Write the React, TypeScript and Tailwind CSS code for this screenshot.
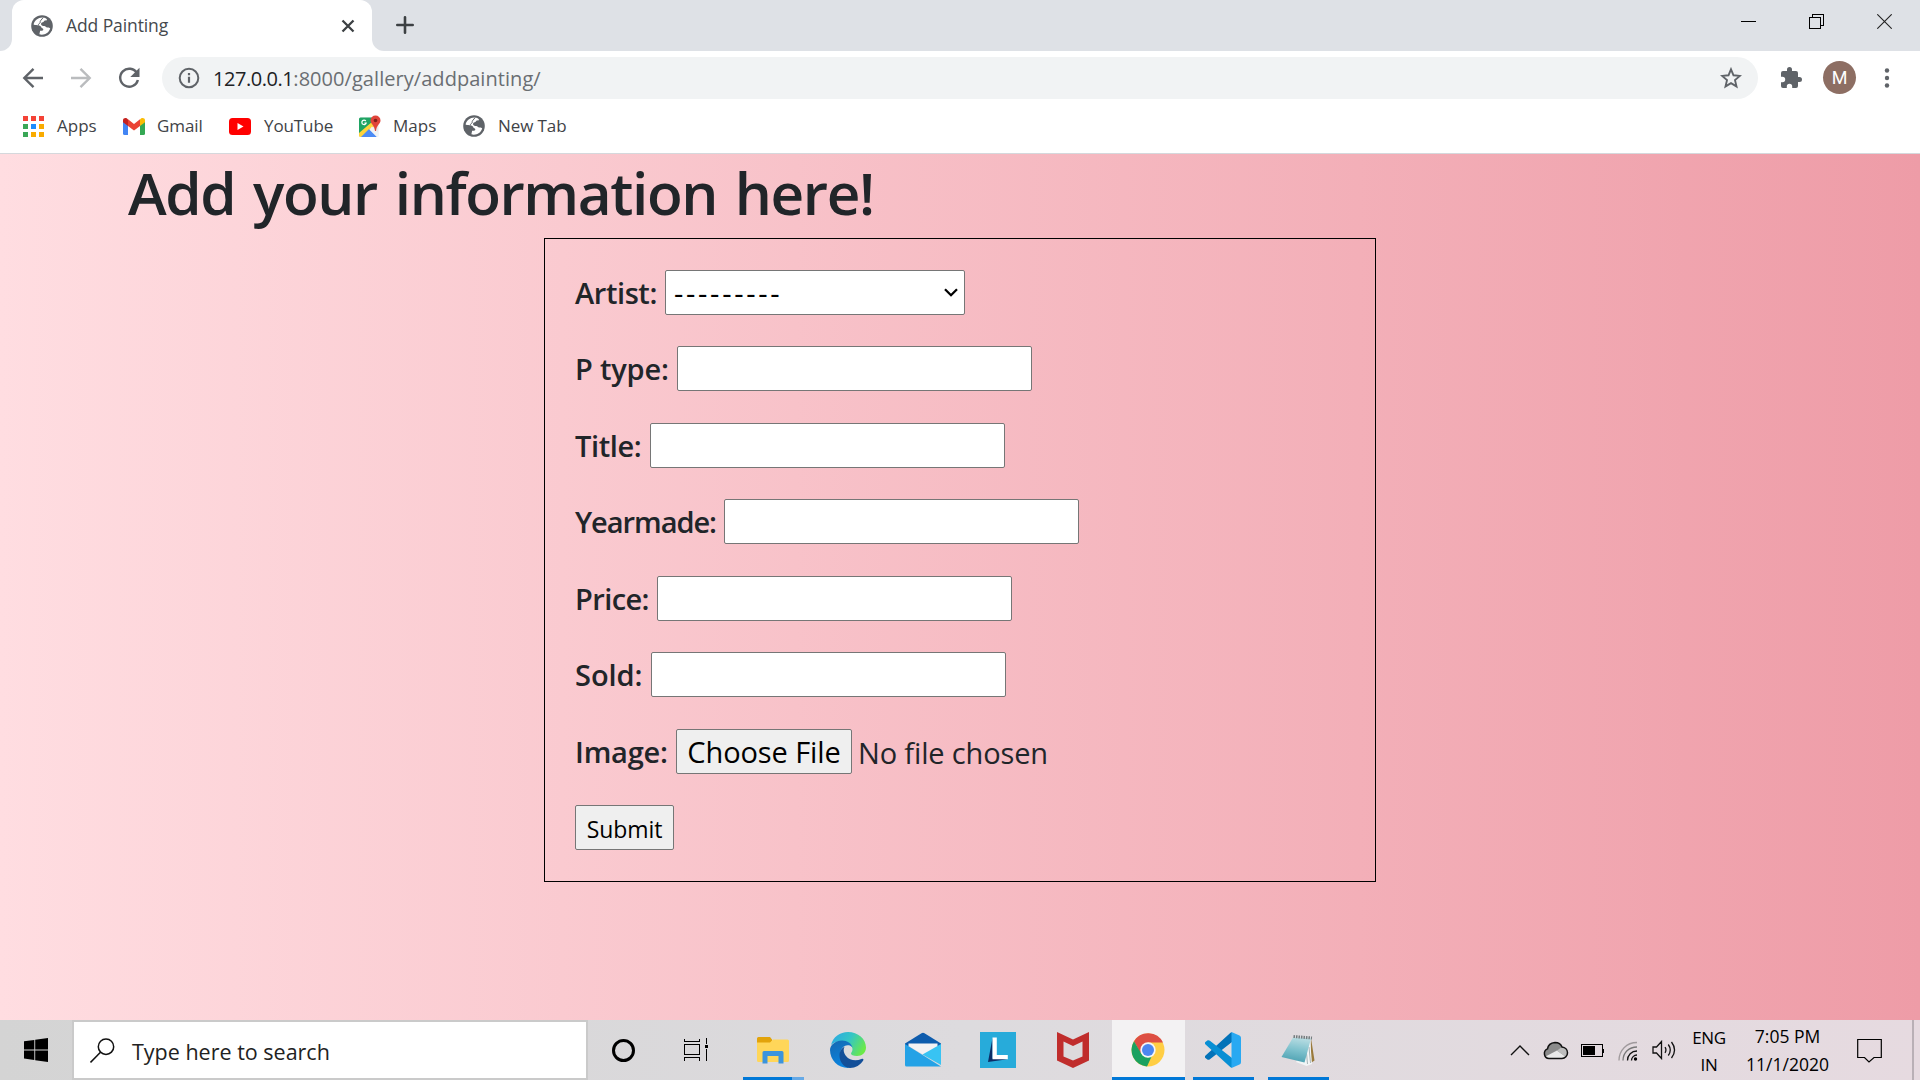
import type { ReactNode } from "react";

function Globe() {
  return (
    <svg width="22" height="22" viewBox="0 0 22 22" className="shrink-0">
      <circle cx="11" cy="11" r="10.8" fill="#5f6368" />
      <path
        d="M12.500 2.600C8 2 3.400 5 2.600 9.600c1.500.9 3.600.6 5.300.8 1.400.2 2.200 1 2.500 2 .3.9 1.500.7 1.800 1.500.3.9-.3 1.700-1.200 1.800l-1.900.1-.7 3.500c4.600 1.300 9.400-1.300 10.800-5.900-.7-.9-1.700-1.100-2.900-1-1.400.1-1.700-1.400-3-1.500-1.400-.1-2.700-.3-3.200-1.500-.3-1.200.5-2 1.700-2.200 1-.2 1-1.500 2-1.800l2.200-.2c.3-.9-.9-1.900-3.500-2.600z"
        fill="#fff"
      />
      <path d="M12.300 2.400 9.500 5.800c-.7 1 .2 1.600-.7 2.300-1 .6-1.700 1.400-1.200 2.400" fill="none" stroke="#5f6368" strokeWidth="1" />
    </svg>
  );
}

function TabStrip() {
  return (
    <div className="flex h-[51px] bg-[#dee1e6]">
      <div className="h-full w-3 bg-white">
        <div className="h-full w-full rounded-br-[12px] bg-[#dee1e6]" />
      </div>
      <div className="flex h-full w-[360px] items-center rounded-t-[12px] bg-white pr-[17px] pl-[19px]">
        <Globe />
        <span className="ml-[13px] flex-1 pb-[2px] text-[17.5px] leading-[48px] tracking-[-0.1px] text-[#45494d]">Add Painting</span>
        <svg width="14" height="14" viewBox="0 0 14 14" fill="none" stroke="#3c4043" strokeWidth="2.300">
          <path d="M1.500 1.500 12.500 12.500M12.500 1.500 1.500 12.500" />
        </svg>
      </div>
      <div className="h-full w-3 bg-white">
        <div className="h-full w-full rounded-bl-[12px] bg-[#dee1e6]" />
      </div>
      <svg className="mt-4 ml-3" width="18" height="18" viewBox="0 0 18 18" stroke="#3c4043" strokeWidth="2.600" strokeLinecap="round">
        <path d="M9 1.300v15.400M1.300 9h15.400" />
      </svg>
      <div className="mr-px ml-auto flex h-[42px] items-center">
        <div className="flex w-[69px] justify-center">
          <div className="h-px w-[15px] bg-black" />
        </div>
        <div className="flex w-[67px] justify-center">
          <svg width="15" height="15" viewBox="0 0 15 15" fill="none" stroke="#000" shapeRendering="crispEdges">
            <path d="M.5 3.500h11v11H.5zM3.500 3.500v-3h11v11h-3" />
          </svg>
        </div>
        <div className="flex w-[69px] justify-center">
          <svg width="15" height="15" viewBox="0 0 15 15" stroke="#222" strokeWidth="1.100">
            <path d="M.3.3 14.700 14.700M14.700.3.3 14.700" />
          </svg>
        </div>
      </div>
    </div>
  );
}

function Toolbar() {
  return (
    <div className="flex h-[54px] items-center pl-[22px]">
      <svg width="22" height="22" viewBox="0 0 22 22" fill="none" stroke="#5f6368" strokeWidth="2.400">
        <path d="M21 11H3M11.500 1.800 2.300 11l9.200 9.200" />
      </svg>
      <svg className="ml-[26px]" width="22" height="22" viewBox="0 0 22 22" fill="none" stroke="#babcbe" strokeWidth="2.400">
        <path d="M1 11h18M10.500 1.800 19.700 11l-9.200 9.200" />
      </svg>
      <svg className="ml-[25px]" width="24" height="24" viewBox="0 0 24 24" fill="none">
        <path d="M20 7.200A9 9 0 1 0 20.900 14" stroke="#5f6368" strokeWidth="2.400" />
        <path d="M22.500 1.800v9.200h-9.200z" fill="#5f6368" />
      </svg>
      <div className="ml-[21px] flex h-[42px] w-[1596px] items-center rounded-full bg-[#f1f3f4] pr-4 pl-4">
        <svg width="22" height="22" viewBox="0 0 22 22" fill="none" stroke="#5f6368" strokeWidth="2">
          <circle cx="11" cy="11" r="9.300" />
          <path d="M11 9.800v6M11 6v2.200" strokeWidth="2.200" />
        </svg>
        <span className="ml-[13px] flex-1 pt-[2px] text-[20px] leading-[40px] text-[#6a6e72]">
          <span className="tracking-[-0.45px] text-[#202124]">127.0.0.1</span>
          <span className="tracking-[0.05px]">:8000/gallery/addpainting/</span>
        </span>
        <svg width="22" height="22" viewBox="0 0 22 22" fill="none" stroke="#5f6368" strokeWidth="1.900">
          <path d="m11 2.300 2.500 6 6.400.6-4.900 4.200 1.500 6.300L11 16.100l-5.500 3.300L7 13.100 2.100 8.900l6.400-.6z" />
        </svg>
      </div>
      <svg className="ml-[21px]" width="24" height="24" viewBox="0 0 24 24" fill="#5f6368">
        <path d="M20.500 11H19V7a2 2 0 0 0-2-2h-4V3.500a2.500 2.500 0 0 0-5 0V5H4a2 2 0 0 0-2 2v3.800h1.500a2.700 2.700 0 0 1 0 5.400H2V20a2 2 0 0 0 2 2h3.800v-1.500a2.700 2.700 0 0 1 5.400 0V22H17a2 2 0 0 0 2-2v-4h1.500a2.500 2.500 0 0 0 0-5z" />
      </svg>
      <div className="mb-px ml-5 flex size-[33px] items-center justify-center rounded-full bg-[#8d6e63] font-[Roboto] text-[18px] text-white">M</div>
      <svg className="ml-7" width="6" height="20" viewBox="0 0 6 20" fill="#5f6368">
        <circle cx="3" cy="2.500" r="2.200" />
        <circle cx="3" cy="10" r="2.200" />
        <circle cx="3" cy="17.500" r="2.200" />
      </svg>
    </div>
  );
}

function AppsIcon() {
  return (
    <div className="grid grid-cols-3 gap-[3px]">
      <i className="size-[5px] bg-[#f44336]" />
      <i className="size-[5px] bg-[#f44336]" />
      <i className="size-[5px] bg-[#f44336]" />
      <i className="size-[5px] bg-[#3aa757]" />
      <i className="size-[5px] bg-[#1a8cff]" />
      <i className="size-[5px] bg-[#f9ab00]" />
      <i className="size-[5px] bg-[#3aa757]" />
      <i className="size-[5px] bg-[#f9ab00]" />
      <i className="size-[5px] bg-[#f9ab00]" />
    </div>
  );
}

function GmailIcon() {
  return (
    <svg width="22" height="17" viewBox="0 0 22 17">
      <path d="M0 3v12.500A1.500 1.500 0 0 0 1.500 17H5V7z" fill="#4285f4" />
      <path d="M22 3v12.500a1.500 1.500 0 0 1-1.500 1.500H17V7z" fill="#34a853" />
      <path d="M17 1.300 11 6 5 1.300V8l6 4.600L17 8z" fill="#ea4335" />
      <path d="M0 3.300V2.500C0 .3 2.300-.5 4 .6l1 .8V8L0 4.200z" fill="#c5221f" />
      <path d="M22 3.300V2.500C22 .3 19.700-.5 18 .6l-1 .8V8l5-3.800z" fill="#fbbc04" />
    </svg>
  );
}

function YouTubeIcon() {
  return (
    <svg width="22" height="17" viewBox="0 0 22 17">
      <rect width="22" height="17" rx="3.500" fill="#f00" />
      <path d="m8.500 5 6 3.500-6 3.500z" fill="#fff" />
    </svg>
  );
}

function MapsIcon() {
  return (
    <svg width="23" height="23" viewBox="0 0 23 23" className="shrink-0">
      <rect x="1" y="2.500" width="19.500" height="19.500" rx="1.500" fill="#e8eaed" />
      <path d="M1 20V4a1.500 1.500 0 0 1 1.500-1.500H16L15 8 1 20z" fill="#1fa463" />
      <path d="M1 18 14.500 6.500 16 11.500 4 22H2.500A1.500 1.500 0 0 1 1 20.500z" fill="#ffd43b" />
      <path d="m11 14 8 8h-16z" fill="#4c8bf5" />
      <path d="m14 11.500 6.500 6.500v2.500A1.500 1.500 0 0 1 19 22l-7.500-7.500z" fill="#f1f3f4" />
      <path d="M7.800 6A2.200 2.200 0 1 0 8.200 8H6.400" fill="none" stroke="#fff" strokeWidth="1.200" />
      <path d="M17.500.5a5 5 0 0 1 5 5c0 3.500-4 4.500-4.500 10.500h-1c-.5-6-4.500-7-4.500-10.500a5 5 0 0 1 5-5z" fill="#e0443a" />
      <circle cx="17.500" cy="5.500" r="1.800" fill="#7e1f1a" />
    </svg>
  );
}

function Bookmark({ icon, label, gap }: { icon: ReactNode; label: string; gap: string }) {
  return (
    <div className={"flex h-full items-center " + gap}>
      <div className="flex w-[22px] justify-center">{icon}</div>
      <span className="text-[17px] leading-[42px] whitespace-nowrap text-[#3f4347]">{label}</span>
    </div>
  );
}

function BookmarksBar() {
  return (
    <div className="h-[49px] border-b border-[#d5d8dc] pl-[22px]">
      <div className="flex h-[42px]">
        <div className="w-[101px]"><Bookmark icon={<AppsIcon />} label="Apps" gap="gap-[13px]" /></div>
        <div className="w-[106px]"><Bookmark icon={<GmailIcon />} label="Gmail" gap="gap-[12px] tracking-[-0.1px]" /></div>
        <div className="w-[129px]"><Bookmark icon={<YouTubeIcon />} label="YouTube" gap="gap-[13px] tracking-[-0.1px]" /></div>
        <div className="w-[105px]"><Bookmark icon={<MapsIcon />} label="Maps" gap="gap-[13px]" /></div>
        <Bookmark icon={<Globe />} label="New Tab" gap="gap-[13px] tracking-[-0.1px]" />
      </div>
    </div>
  );
}

function Field({ label, spacing, children }: { label: string; spacing: string; children: ReactNode }) {
  return (
    <div className="flex h-[76.5px]">
      <label className={"text-[29px] leading-[46px] font-semibold whitespace-nowrap text-[#212529] " + spacing}>{label}</label>
      {children}
    </div>
  );
}

function TextInput() {
  return <input className="h-[45px] w-[355px] rounded-[2px] border border-[#767676] bg-white px-2 text-[29px]" />;
}

function PaintingForm() {
  return (
    <form className="ml-[544px] h-[644px] w-[832px] border border-black pt-[30.900px] pl-[30px]">
      <Field label="Artist:" spacing="w-[90px] tracking-[-0.4px]">
        <div className="flex h-[45px] w-[300px] items-center justify-between rounded-[2px] border border-[#767676] bg-white pr-[6px] pl-[8px]">
          <span className="text-[29px] leading-[43px] tracking-[2.700px] text-black">---------</span>
          <svg width="14" height="9" viewBox="0 0 14 9" fill="none" stroke="#000" strokeWidth="2.300">
            <path d="m1 1.200 6 6 6-6" />
          </svg>
        </div>
      </Field>
      <Field label="P type:" spacing="w-[102px] tracking-[-0.2px]"><TextInput /></Field>
      <Field label="Title:" spacing="w-[75px] tracking-[-0.4px]"><TextInput /></Field>
      <Field label="Yearmade:" spacing="w-[149px] tracking-[-1.050px]"><TextInput /></Field>
      <Field label="Price:" spacing="w-[82px] tracking-[-0.6px]"><TextInput /></Field>
      <Field label="Sold:" spacing="w-[76px] tracking-[-0.050px]"><TextInput /></Field>
      <Field label="Image:" spacing="w-[101px] tracking-[-0.2px]">
        <button type="button" className="h-[45px] w-[176px] rounded-[2px] border border-[#767676] bg-[#efefef] text-[29px] leading-[43px] tracking-[-0.1px] whitespace-nowrap text-black">
          Choose File
        </button>
        <span className="ml-[6px] text-[29px] leading-[47px] tracking-[-0.150px] text-[#212529]">No file chosen</span>
      </Field>
      <button type="button" className="h-[45px] w-[99px] rounded-[2px] border border-[#767676] bg-[#efefef] pt-[3px] text-[23px] leading-[40px] tracking-[-0.1px] text-black">
        Submit
      </button>
    </form>
  );
}

function ExplorerIcon() {
  return (
    <svg width="32" height="28" viewBox="0 0 32 28">
      <path d="M0 2.500A1.500 1.500 0 0 1 1.500 1H13l2 2.500V8H0z" fill="#e2a30b" />
      <path d="M0 6.500h13l3-3h14.500A1.500 1.500 0 0 1 32 5v19.500a1.500 1.500 0 0 1-1.500 1.500h-29A1.500 1.500 0 0 1 0 24.500z" fill="#ffd659" />
      <path d="M5.500 27.500V16.500A1.500 1.500 0 0 1 7 15h18a1.500 1.500 0 0 1 1.500 1.500v11h-5V20H10.500v7.500z" fill="#3c94dc" />
    </svg>
  );
}

function EdgeIcon() {
  return (
    <svg width="36" height="36" viewBox="0 0 36 36">
      <defs>
        <linearGradient id="edgeTop" x1="0" y1="0.200" x2="1" y2="0.600">
          <stop offset="0" stopColor="#2ba9e4" />
          <stop offset="0.500" stopColor="#35c6c4" />
          <stop offset="1" stopColor="#6bea46" />
        </linearGradient>
        <linearGradient id="edgeLeft" x1="0" y1="0" x2="0.400" y2="1">
          <stop offset="0" stopColor="#1668b0" />
          <stop offset="1" stopColor="#0a84e0" />
        </linearGradient>
      </defs>
      <path d="M1 13C3 5 10 0 18 0c10 0 18 7 18 15.500 0 5-4 8.500-9 8.500-4 0-6-1.200-6-2.500 0-1 1.500-1.700 1.500-4.500C22 12 17 9 12 9 7 9 3 11 1 13z" fill="url(#edgeTop)" />
      <path d="M0 18c0-5 5.500-9.500 12-9.500 5.500 0 9.500 3 10.500 7-1.300-1.600-3-2.200-4.700-2.200C13 13.300 10 18 10 23c0 6 4 11 10 12.900C9 37 0 28.500 0 18z" fill="url(#edgeLeft)" />
      <path d="M14.800 14.500C13 17 13.500 21 16 24c3.500 4.500 10 5.500 15.500 3 1.500-.6 2.500.2 1.700 1.500C30.500 33 25.500 36 20 36 13.500 35.500 9.500 29.500 9.500 23.500c0-4 2-7.500 5.300-9z" fill="#134f99" />
    </svg>
  );
}

function MailIcon() {
  return (
    <svg width="36" height="36" viewBox="0 0 36 36">
      <path d="M0 11.500 16.500 1.200a3 3 0 0 1 3 0L36 11.500V14H0z" fill="#0e5cad" />
      <path d="M3.500 11.500h29V16L19 23 3.500 14z" fill="#f3f2f4" />
      <path d="M36 12v21L17.500 22.500z" fill="#38c3f3" />
      <path d="M0 12l36 22.500H1.500A1.500 1.500 0 0 1 0 33z" fill="#24a2e6" />
    </svg>
  );
}

function LenovoIcon() {
  return (
    <svg width="36" height="36" viewBox="0 0 36 36">
      <path d="M0 0h36v36H0z" fill="#27abda" />
      <path d="M12.500 6 8 30l19.500-2.800-15-1z" fill="#0b2d66" />
      <path d="M12.500 5.500h4.300V23h11v4.200H12.500z" fill="#fff" />
    </svg>
  );
}

function McAfeeIcon() {
  return (
    <svg width="32" height="36" viewBox="0 0 32 36">
      <path d="M0 0l16 7.500L32 0v28.500L16 36 0 28.500z" fill="#c02d2c" />
      <path d="M6.500 9.500 16 14l9.500-4.500v15L16 28.500l-9.500-4z" fill="#dddadc" />
    </svg>
  );
}

function ChromeIcon() {
  return (
    <svg width="34" height="34" viewBox="0 0 34 34">
      <circle cx="17" cy="17" r="16.500" fill="#ffce44" />
      <path d="M3 8.300A16.500 16.500 0 0 1 32 9.500H17L10 21z" fill="#dd4f43" />
      <path d="M3 8.300 10.500 21l6.500 3.500 4.500-3L16 33.500A16.500 16.500 0 0 1 3 8.300z" fill="#1aa15f" />
      <circle cx="17" cy="17" r="7.700" fill="#f5f5f6" />
      <circle cx="17" cy="17" r="6" fill="#4b86f0" />
    </svg>
  );
}

function CodeIcon() {
  return (
    <svg width="36" height="36" viewBox="0 0 36 36">
      <path d="M.3 23.800c-.6.800-.5 1.700.1 2.300L2.700 27.700c.7.300 1.500.2 2.200-.4L27 10V.2L25.500.8z" fill="#0272b8" />
      <path d="M.3 12.200c-.6-.8-.5-1.700.1-2.300L2.700 8.300c.7-.3 1.500-.2 2.200.4L27 26v9.800l-1.500-.6z" fill="#078fd4" />
      <path d="m26.500 0 8 3.400A2.500 2.500 0 0 1 36 5.700v24.600a2.500 2.500 0 0 1-1.500 2.300l-8 3.400z" fill="#29a9f2" />
    </svg>
  );
}

function NotepadIcon() {
  return (
    <svg width="36" height="34" viewBox="0 0 36 34">
      <defs>
        <linearGradient id="notepadCover" x1="0.500" y1="0" x2="0.300" y2="1">
          <stop offset="0" stopColor="#b7dce2" />
          <stop offset="0.500" stopColor="#7cc0cc" />
          <stop offset="1" stopColor="#4a9fb0" />
        </linearGradient>
      </defs>
      <path d="m31 5 3.500 22.500-4.500 3z" fill="#9a7a3c" />
      <path d="M30 5l2 26-5.500 2L16 29z" fill="#f2f5f6" />
      <path d="m29 14 1.500 16M26.500 20l1 11" stroke="#a9b5b8" strokeWidth="1" />
      <path d="M13 4.500 31 5.500 24.500 29.500 1.500 24z" fill="url(#notepadCover)" />
      <path d="M13.500 3.500 32 5" stroke="#737c7e" strokeWidth="3" strokeDasharray="1.500 1" />
    </svg>
  );
}

function AppButton({ icon, bar }: { icon: ReactNode; bar?: ReactNode }) {
  return (
    <div className="flex h-full w-[75px] flex-col items-center">
      <div className="flex h-[57px] items-center pt-[3px] pr-[2px]">{icon}</div>
      {bar}
    </div>
  );
}

function SystemTray() {
  return (
    <div className="ml-auto flex h-full items-center text-black">
      <div className="flex w-9 justify-center">
        <svg width="20" height="11" viewBox="0 0 20 11" fill="none" stroke="#111" strokeWidth="1.400">
          <path d="m1 10 9-9 9 9" />
        </svg>
      </div>
      <div className="flex w-9 justify-center">
        <svg width="26" height="19" viewBox="0 0 26 19">
          <path d="M6 17.500a5 5 0 0 1-1.500-9.600C5 4.500 8 1.800 12 1.500c3.500 0 6 1.800 7 4.500 3 .3 5.500 2.600 5.500 5.700 0 3.300-2.500 5.800-5.500 5.800z" fill="#8b8b8b" />
          <path d="M2.500 15.500 14 9.500l9 6.500-4 1.500H6z" fill="#e9e9e9" />
          <path d="M14 9.500 19 6c3 .3 5.500 2.600 5.500 5.700L23 16z" fill="#bdbdbd" />
          <path d="M6 17.500a5 5 0 0 1-1.500-9.600C5 4.500 8 1.800 12 1.500c3.500 0 6 1.800 7 4.500 3 .3 5.500 2.600 5.500 5.700 0 3.300-2.500 5.800-5.500 5.800z" fill="none" stroke="#111" strokeWidth="1.500" />
        </svg>
      </div>
      <div className="flex w-9 justify-center pl-px">
        <svg width="24" height="13" viewBox="0 0 24 13" shapeRendering="crispEdges">
          <path d="M.5.500h21v12H.500zM22.500 4.500v4" fill="none" stroke="#000" />
          <path d="M2 2h12v9H2z" />
        </svg>
      </div>
      <div className="flex w-9 justify-center pt-[2px]">
        <svg width="20" height="20" viewBox="0 0 20 20" fill="none" strokeWidth="1.300">
          <path d="M1 19.500C1 9.500 8.500 1.500 19 1.500" stroke="#a09a9d" />
          <path d="M5 19.500C5 11.500 11 6 19 6" stroke="#777" />
          <path d="M9.500 19.500c0-5.500 4-9.500 9.500-9.500M13.500 19.500c0-3 2.500-5.500 5.500-5.500" stroke="#111" />
          <circle cx="17.500" cy="18" r="1.700" fill="#000" />
        </svg>
      </div>
      <div className="flex w-9 justify-center">
        <svg width="24" height="20" viewBox="0 0 24 20" fill="none" stroke="#111" strokeWidth="1.300">
          <path d="M1 7h3.500L9.500 1.500v17L4.500 13H1zM13 7.200c1.200 1.800 1.200 3.800 0 5.600M16.300 4.500c2.500 3.500 2.500 7.500 0 11M19.500 2c3.800 5 3.800 11 0 16" />
        </svg>
      </div>
      <div className="w-[54px] pt-px text-center text-[17px] leading-[27px] tracking-[-0.3px]">
        <div>ENG</div>
        <div>IN</div>
      </div>
      <div className="w-[103px] text-center text-[17.500px] leading-[28px]">
        <div>7:05 PM</div>
        <div>11/1/2020</div>
      </div>
      <div className="flex w-[60px] justify-center">
        <svg width="25" height="25" viewBox="0 0 25 25" fill="none" stroke="#000" strokeWidth="1.200">
          <path d="M.7 1.500h23.600v18H17L12 24l-4.500-4.500H.700z" />
        </svg>
      </div>
      <div className="ml-[13px] h-full w-2 border-l-2 border-[#b9b0b6]" />
    </div>
  );
}

function Taskbar() {
  return (
    <div className="flex h-[60px] bg-linear-to-r from-[#d4d4d4] via-[#dddbde] to-[#e6dae0]">
      <div className="flex w-[72px] items-center justify-center">
        <svg width="24" height="24" viewBox="0 0 24 24">
          <path d="M0 3.300 10.300 2v9.500H0zM11.200 1.800 24 0v11.500H11.200zM0 12.500h10.300V22L0 20.600zM11.200 12.500H24V24l-12.800-1.800z" />
        </svg>
      </div>
      <div className="flex w-[516px] items-center border-2 border-[#cacaca] bg-white pl-4">
        <svg width="25" height="25" viewBox="0 0 25 25" fill="none" stroke="#111" strokeWidth="1.500">
          <circle cx="16" cy="8.700" r="7.700" />
          <path d="M10.500 14.200.5 24.400" />
        </svg>
        <span className="ml-[17px] pt-[4px] text-[21.500px] leading-[52px] text-[#222]">Type here to search</span>
      </div>
      <div className="flex w-[72px] items-center justify-center">
        <div className="mr-px size-[23px] rounded-full border-[3px] border-black" />
      </div>
      <div className="flex w-[72px] items-center justify-center">
        <svg width="24" height="24" viewBox="0 0 24 24" fill="none" stroke="#000" shapeRendering="crispEdges">
          <path d="M.5.500v3h15v-3M.5 6.500h15v10H.500zM.5 23v-3.500h15V23M22.500 0v6M22.500 11v12" />
          <path d="M21 7h3v3h-3z" fill="#000" stroke="none" />
        </svg>
      </div>
      <div className="ml-1 flex">
        <AppButton
          icon={<ExplorerIcon />}
          bar={
            <div className="flex h-[3px] w-[61px]">
              <div className="w-[49px] bg-[#0078d7]" />
              <div className="flex-1 bg-[#66a9e6]" />
            </div>
          }
        />
        <AppButton icon={<EdgeIcon />} />
        <AppButton icon={<MailIcon />} />
        <AppButton icon={<LenovoIcon />} />
        <AppButton icon={<McAfeeIcon />} />
        <div className="flex w-[75px] justify-center">
          <div className="w-[73px] bg-[#f3f2f3]">
            <div className="flex h-[57px] items-center justify-center pt-[3px] pr-[2px]"><ChromeIcon /></div>
            <div className="h-[3px] bg-[#0078d7]" />
          </div>
        </div>
        <AppButton icon={<CodeIcon />} bar={<div className="h-[3px] w-[61px] bg-[#0078d7]" />} />
        <AppButton icon={<NotepadIcon />} bar={<div className="h-[3px] w-[61px] bg-[#0078d7]" />} />
      </div>
      <SystemTray />
    </div>
  );
}

export default function App() {
  return (
    <div className="flex h-[1080px] w-[1920px] flex-col overflow-hidden bg-white font-['Open_Sans',sans-serif]">
      <TabStrip />
      <Toolbar />
      <BookmarksBar />
      <main className="h-[866px] bg-linear-to-r/srgb from-[#ffdde1] to-[#ee9ca7]">
        <h1 className="mb-[7px] pl-[128px] text-[58.500px] leading-[77px] font-semibold tracking-[-1.400px] text-[#212529] [word-spacing:4px]">
          Add your information here!
        </h1>
        <PaintingForm />
      </main>
      <Taskbar />
    </div>
  );
}
